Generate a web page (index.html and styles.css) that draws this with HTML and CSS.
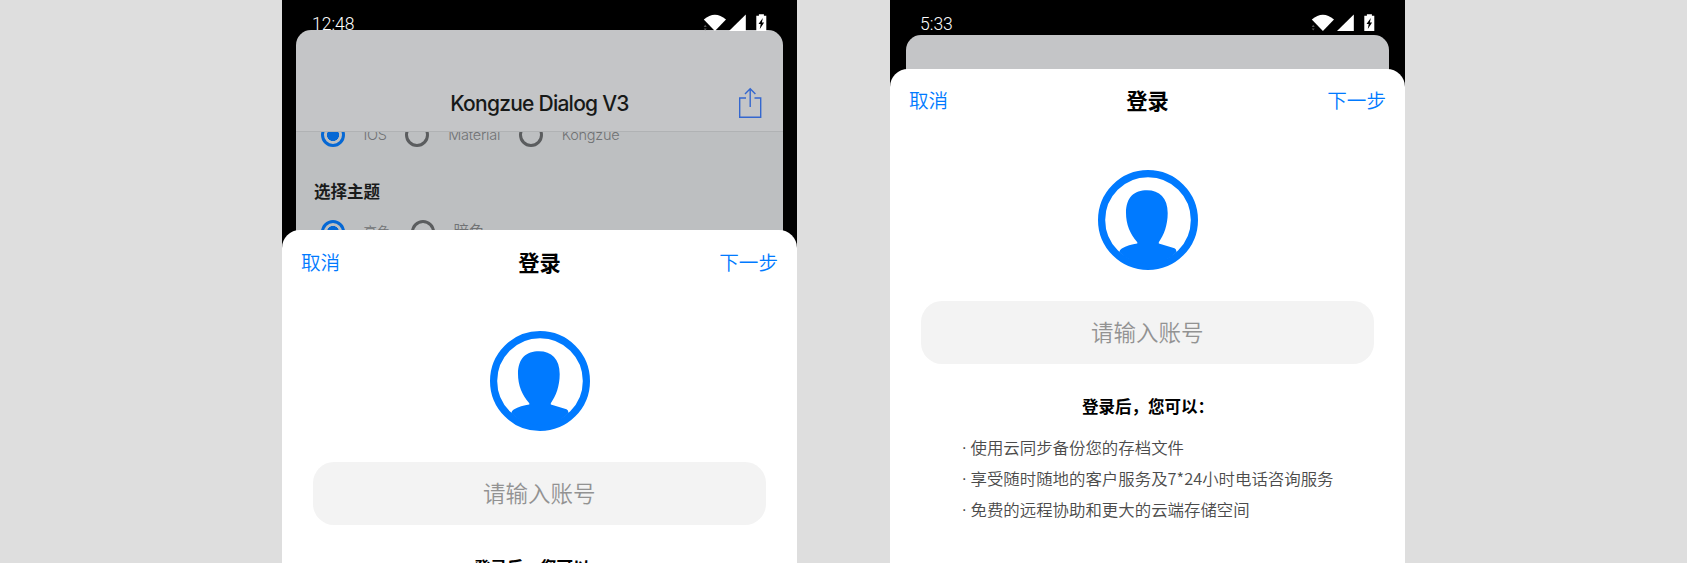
FILE: index.html
```html
<!DOCTYPE html>
<html lang="zh-CN">
<head>
<meta charset="utf-8">
<title>Kongzue Dialog V3</title>
<link rel="stylesheet" href="styles.css">
</head>
<body>
<svg class="defs" width="0" height="0">
  <symbol id="signals" viewBox="0 0 64 18">
    <path fill="#fff" d="M.8 5.600Q11.900-4.200 23 5.600L11.900 17Z"/>
    <path fill="#fff" d="M26 17 42.800.5V17Z"/>
    <path fill="#fff" d="M53.300 1.800h2.600V.2h5v1.600h2.400V17h-10Z"/>
    <path fill="#000" d="M59.800 4 55.500 10h2.200l-.9 5 4.300-6.500h-2.200Z"/>
    <path fill="#555" d="M.7 13 2.200 10.800 3.700 13ZM.7 14.500h3L2.200 16.500Z"/>
  </symbol>
  <symbol id="avatar" viewBox="0 0 100 100">
    <circle cx="50" cy="50" r="46.400" fill="none" stroke="#007aff" stroke-width="7.200"/>
    <path fill="#007aff" d="M28 43C28 27 36.500 20.300 49 20.300S69.700 28 69.700 43C69.700 55 66 65 60.800 72.200V73.600L76.500 78.200Q78.300 79 78.600 82C72 89 62 94 50 94S28 89 21.300 82Q21.700 79.500 23.800 78.500C28 76 34 74.500 39.300 73.600V72.200C32 64 28 54 28 43Z"/>
  </symbol>
</svg>
<main class="stage">
  <section class="phone phone-main">
    <div class="page">
      <header class="page-header">
        <h1>Kongzue Dialog V3</h1>
        <svg class="share" viewBox="0 0 24 32" width="24" height="32" fill="none" stroke="#3467cf" stroke-width="1.400">
          <path d="M8 11H1.700v19.200h21V11h-6.200M12.200 20V2.200M7 7l5.200-5.200L17.400 7"/>
        </svg>
      </header>
      <div class="page-body">
        <div class="options style-options">
          <span class="option"><i class="radio on"></i>IOS</span>
          <span class="option"><i class="radio"></i>Material</span>
          <span class="option"><i class="radio"></i>Kongzue</span>
        </div>
        <h2>选择主题</h2>
        <div class="options theme-options">
          <span class="option selected"><i class="radio on"></i>亮色</span>
          <span class="option"><i class="radio"></i>暗色</span>
        </div>
      </div>
    </div>
    <div class="status"><span>12:48</span><svg width="64" height="18"><use href="#signals"/></svg></div>
    <div class="sheet">
      <div class="bar"><a>取消</a><b>登录</b><a>下一步</a></div>
      <svg class="avatar" width="100" height="100"><use href="#avatar"/></svg>
      <div class="field">请输入账号</div>
      <div class="lead">登录后，您可以：</div>
    </div>
  </section>
  <section class="phone phone-full">
    <div class="page"></div>
    <div class="status"><span>5:33</span><svg width="64" height="18"><use href="#signals"/></svg></div>
    <div class="sheet">
      <div class="bar"><a>取消</a><b>登录</b><a>下一步</a></div>
      <svg class="avatar" width="100" height="100"><use href="#avatar"/></svg>
      <div class="field">请输入账号</div>
      <div class="lead">登录后，您可以：</div>
      <div class="benefits">
        <p><span class="dot">·</span>使用云同步备份您的存档文件</p>
        <p><span class="dot">·</span>享受随时随地的客户服务及7*24小时电话咨询服务</p>
        <p><span class="dot">·</span>免费的远程协助和更大的云端存储空间</p>
      </div>
    </div>
  </section>
</main>
</body>
</html>
```
FILE: styles.css
```css
* { box-sizing: border-box; }
body {
  margin: 0;
  background: #dedede;
  font-family: "Noto Sans CJK SC", sans-serif;
  font-weight: 350;
}
h1, h2, p { margin: 0; }
.defs { position: absolute; }
.stage {
  display: flex;
  justify-content: center;
  gap: 93px;
  height: 563px;
  overflow: hidden;
}
.phone {
  position: relative;
  width: 515px;
  height: 563px;
  overflow: hidden;
  background: #000;
}
.phone-main { padding: 29.500px 14px 0; }
.phone-full { padding: 34.500px 16px 0; }
.page {
  height: 300px;
  border-radius: 15px 15px 0 0;
  background: #c4c5c7;
  overflow: hidden;
}
.page-header {
  display: grid;
  grid-template-columns: 1fr auto 1fr;
  align-items: end;
  height: 102px;
  padding: 0 21px 12px;
  border-bottom: 1px solid #b0b2b4;
}
.page-header h1 {
  grid-column: 2;
  margin-bottom: -1px;
  font: 500 21px/32px Inter, sans-serif;
  letter-spacing: -0.750px;
  color: #171918;
}
.share { justify-self: end; }
.page-body {
  height: 200px;
  background: #bdbfc1;
  overflow: hidden;
}
.options {
  display: flex;
  padding-left: 24.500px;
  height: 24px;
  color: #707274;
  font: 350 14.500px/24px Inter, "Noto Sans CJK SC", sans-serif;
  letter-spacing: -0.250px;
}
.style-options { margin-top: -9px; gap: 18.600px; }
.theme-options { gap: 20px; margin-top: 17px; font-size: 15.500px; letter-spacing: 0; }
.theme-options .selected { font-size: 13.500px; }
.option { display: flex; gap: 19px; }
.radio {
  width: 24px;
  height: 24px;
  border: 3px solid #5b5d5f;
  border-radius: 50%;
}
.radio.on {
  border-color: #0668d4;
  background: radial-gradient(circle, #0668d4 5.700px, transparent 6.300px);
}
.page-body h2 {
  margin: 32px 0 0 18px;
  font-size: 16.500px;
  line-height: 24px;
  font-weight: 700;
  color: #191b1b;
}
.status {
  position: absolute;
  top: 14px;
  left: 30px;
  right: 30px;
  display: flex;
  justify-content: space-between;
  color: #fff;
  font: 350 17.500px/20px Roboto, sans-serif;
}
.sheet {
  position: absolute;
  inset: 230px 0 auto;
  height: 500px;
  padding: 10px 19px 0;
  border-radius: 18px 18px 0 0;
  background: #fff;
}
.phone-full .sheet { top: 69px; }
.phone-full .bar { position: relative; top: -1px; }
.bar {
  display: grid;
  grid-template-columns: 1fr auto 1fr;
  align-items: center;
  height: 42px;
  font-size: 19.600px;
  color: #007aff;
}
.bar a:last-child { text-align: right; }
.bar b { font-size: 21.300px; font-weight: 700; color: #000; }
.avatar { display: block; margin: 48.500px auto 0; }
.field {
  margin: 31.500px 12.500px 0 12px;
  height: 62.500px;
  border-radius: 21px;
  background: #f3f3f3;
  color: #929292;
  font-size: 22.500px;
  line-height: 60px;
  text-align: center;
}
.lead {
  margin: 30.500px 0 0 173px;
  font-size: 16.500px;
  line-height: 24px;
  font-weight: 700;
  color: #000;
}
.benefits {
  margin: 13.500px 0 0 52.500px;
  font-size: 16.430px;
  line-height: 31px;
  color: #4b4b4b;
}
.benefits p { display: flex; }
.dot {
  width: 9px;
  font-family: "Liberation Sans", sans-serif;
}
```
